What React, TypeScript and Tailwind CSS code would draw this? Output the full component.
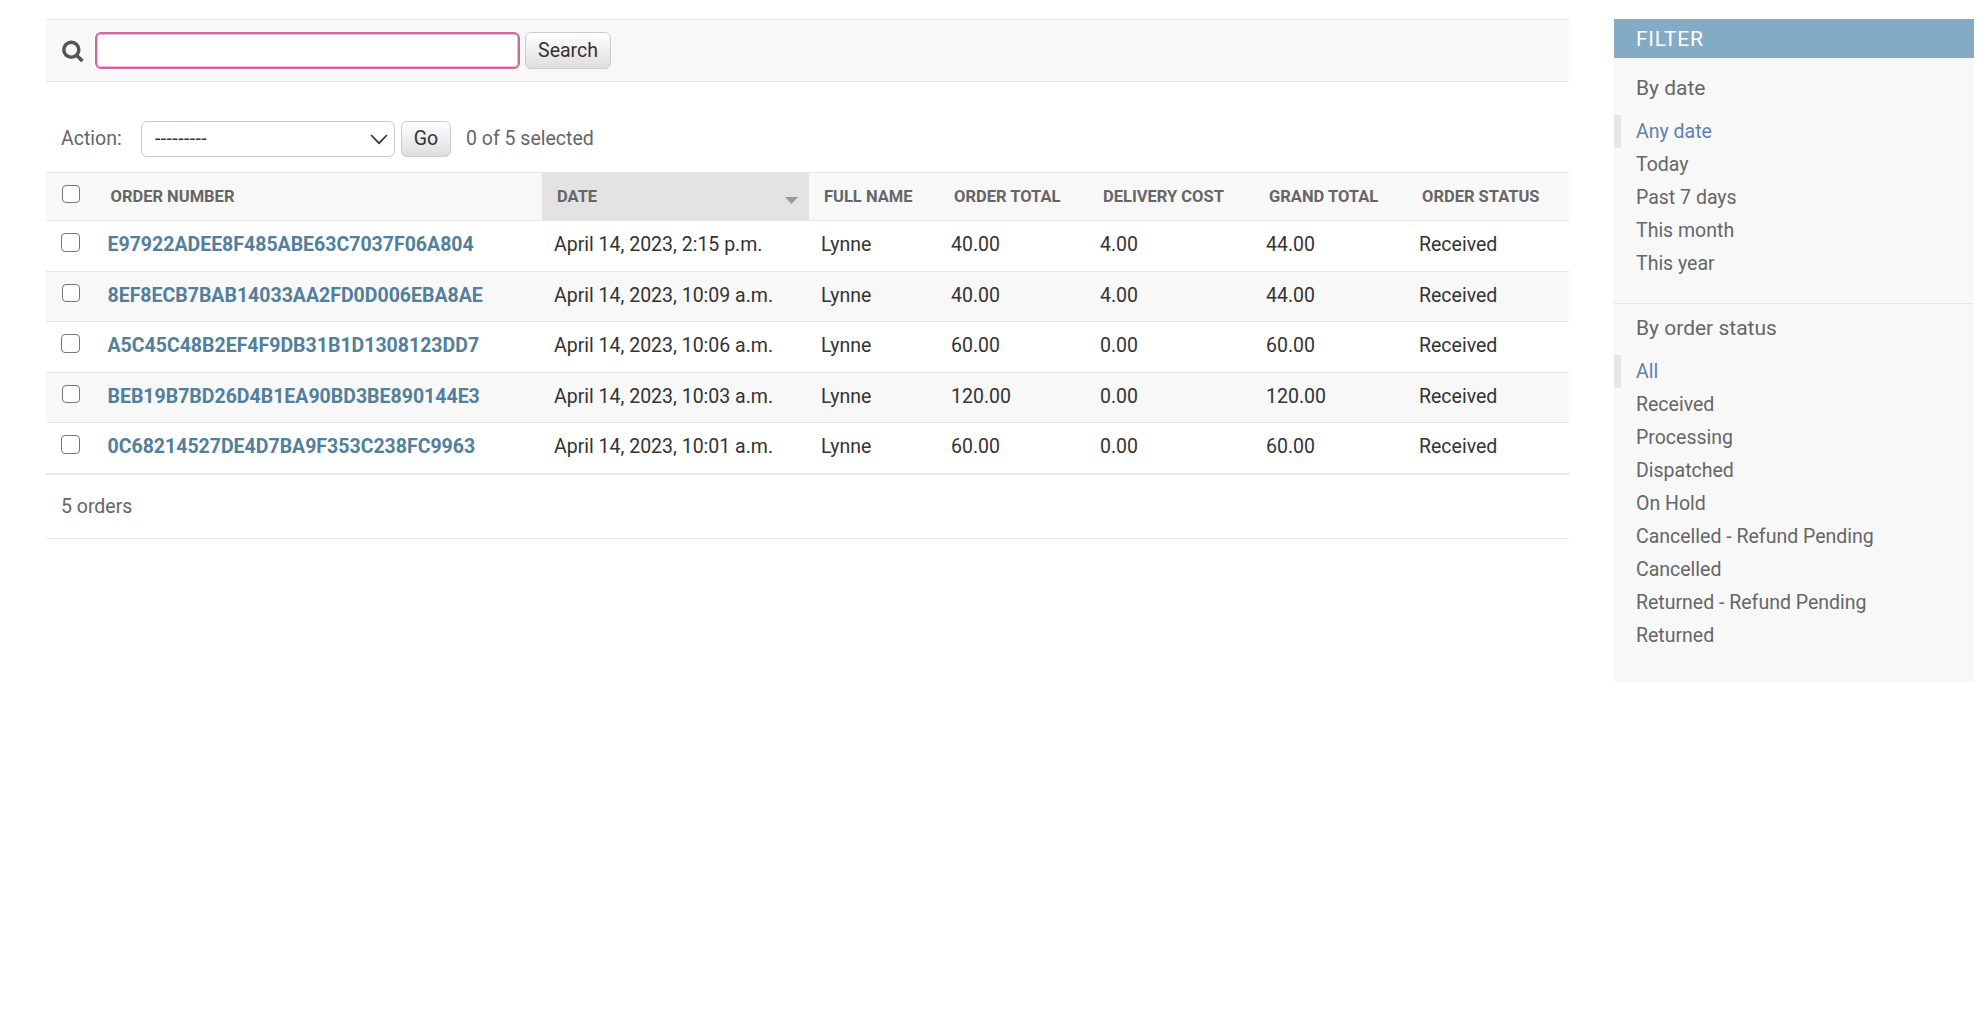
import React from "react";

const columns = [
  { label: "Order number", sorted: false },
  { label: "Date", sorted: true },
  { label: "Full name", sorted: false },
  { label: "Order total", sorted: false },
  { label: "Delivery cost", sorted: false },
  { label: "Grand total", sorted: false },
  { label: "Order status", sorted: false },
];

const orders = [
  ["E97922ADEE8F485ABE63C7037F06A804", "April 14, 2023, 2:15 p.m.", "Lynne", "40.00", "4.00", "44.00", "Received"],
  ["8EF8ECB7BAB14033AA2FD0D006EBA8AE", "April 14, 2023, 10:09 a.m.", "Lynne", "40.00", "4.00", "44.00", "Received"],
  ["A5C45C48B2EF4F9DB31B1D1308123DD7", "April 14, 2023, 10:06 a.m.", "Lynne", "60.00", "0.00", "60.00", "Received"],
  ["BEB19B7BD26D4B1EA90BD3BE890144E3", "April 14, 2023, 10:03 a.m.", "Lynne", "120.00", "0.00", "120.00", "Received"],
  ["0C68214527DE4D7BA9F353C238FC9963", "April 14, 2023, 10:01 a.m.", "Lynne", "60.00", "0.00", "60.00", "Received"],
];

const dateFilters = ["Any date", "Today", "Past 7 days", "This month", "This year"];
const statusFilters = [
  "All",
  "Received",
  "Processing",
  "Dispatched",
  "On Hold",
  "Cancelled - Refund Pending",
  "Cancelled",
  "Returned - Refund Pending",
  "Returned",
];

const buttonClass =
  "rounded-[6px] border border-[#ccc] bg-linear-to-b from-white to-[#dedede] text-[#333] leading-[24px]";

function Checkbox({ large, label }: { large: boolean; label: string }) {
  return (
    <input
      type="checkbox"
      aria-label={label}
      className={
        large
          ? "block size-[19px] appearance-none rounded-[4px] border border-[#767676] bg-white"
          : "ml-px block size-[18px] appearance-none rounded-[4px] border border-[#767676] bg-white"
      }
    />
  );
}

function FilterList({ items }: { items: string[] }) {
  return (
    <ul>
      {items.map((item, i) => (
        <li
          key={item}
          className={
            i === 0
              ? "h-[33px] border-l-[7px] border-[#e6e6e6] pl-[15px] leading-[34px] text-[#5f80b1]"
              : "h-[33px] pl-[22px] leading-[34px]"
          }
        >
          {item}
        </li>
      ))}
    </ul>
  );
}

export default function App() {
  return (
    <div className="flex h-[1030px] items-start overflow-hidden bg-white pt-[19px] pl-[46px] font-['Roboto',sans-serif] text-[19.5px] text-[#666]">
      <main className="w-[1523px]">
        <form className="flex h-[63px] items-start border-y border-[#e6e6e6] bg-[#f8f8f8] pt-3 pl-[15px]">
          <svg viewBox="0 0 24 24" className="mt-2 size-6 shrink-0" fill="none" stroke="#555" strokeWidth="3.5">
            <circle cx="10.3" cy="9.8" r="7.5" />
            <path d="M15.6 15.2 L21.4 21" strokeWidth="3.6" />
          </svg>
          <input
            aria-label="Search"
            className="ml-[10px] h-[37px] w-[425px] rounded-[6px] border-2 border-[#cb6a9a] bg-white px-2 shadow-[inset_0_0_0_1px_#f3bcd4,0_0_0_1px_#fff] outline-none"
          />
          <button type="button" className={`ml-[5px] h-[37px] w-[86px] ${buttonClass}`}>
            Search
          </button>
        </form>

        <div className="flex h-[90px] items-start pt-[39px] pl-[15px]">
          <span className="w-20 pt-[6px] leading-[24px]">Action:</span>
          <div className="relative h-9 w-[254px]">
            <select
              aria-label="Action"
              className="block size-full appearance-none rounded-[6px] border border-[#ccc] bg-white pl-[13px] tracking-[0.4px] text-[#333] outline-none"
            >
              <option>---------</option>
            </select>
            <svg viewBox="0 0 18 11" className="absolute top-[13px] right-[7px] h-[11px] w-[18px]" fill="none" stroke="#333" strokeWidth="1.7">
              <path d="M1 1 L9 9.2 L17 1" />
            </svg>
          </div>
          <button type="button" className={`ml-[6px] h-9 w-[50px] ${buttonClass}`}>
            Go
          </button>
          <span className="ml-[15px] pt-[6px] leading-[24px]">0 of 5 selected</span>
        </div>

        <table className="w-[1523px] table-fixed border-separate border-spacing-0 text-left">
          <colgroup>
            <col className="w-[49.5px]" />
            <col className="w-[446.5px]" />
            <col className="w-[267px]" />
            <col className="w-[130px]" />
            <col className="w-[149px]" />
            <col className="w-[166px]" />
            <col className="w-[153px]" />
            <col className="w-[162px]" />
          </colgroup>
          <thead>
            <tr className="h-[49px] bg-[#f8f8f8] text-[16.5px] uppercase">
              <th className="border-y border-[#e6e6e6] p-0 pt-3 pl-[15px] align-top">
                <Checkbox large={false} label="Select all orders" />
              </th>
              {columns.map((c) => (
                <th
                  key={c.label}
                  className={
                    c.sorted
                      ? "border-y border-[#e6e6e6] bg-[#e3e3e3] p-0 pt-3 pr-[11px] pl-[15px] align-top leading-[24px] font-bold"
                      : "border-y border-[#e6e6e6] p-0 pt-3 pl-[15px] align-top leading-[24px] font-bold whitespace-nowrap"
                  }
                >
                  {c.sorted ? (
                    <div className="flex justify-between">
                      <span>{c.label}</span>
                      <svg viewBox="0 0 13 7" className="mt-3 h-[7px] w-[13px]" fill="#999">
                        <path d="M0 0 H13 L6.5 7 Z" />
                      </svg>
                    </div>
                  ) : (
                    c.label
                  )}
                </th>
              ))}
            </tr>
          </thead>
          <tbody>
            {orders.map((row, i) => (
              <tr key={row[0]} className={i % 2 ? "h-[50px] bg-[#f8f8f8]" : "h-[51px] bg-white"}>
                <td className="border-b border-[#e6e6e6] p-0 pt-3 pl-[15px] align-top">
                  <Checkbox large={i % 2 === 0} label={`Select order ${row[0]}`} />
                </td>
                {row.map((cell, j) => (
                  <td
                    key={j}
                    className={
                      j === 0
                        ? "border-b border-[#e6e6e6] p-0 pt-3 pl-3 align-top leading-[24px] font-bold text-[#527f9b]"
                        : "border-b border-[#e6e6e6] p-0 pt-3 pl-3 align-top leading-[24px] text-[#333]"
                    }
                  >
                    {cell}
                  </td>
                ))}
              </tr>
            ))}
          </tbody>
        </table>

        <p className="h-[65px] border-y border-[#e6e6e6] pt-5 pl-[15px] leading-[24px]">5 orders</p>
      </main>

      <aside className="ml-[45px] h-[663px] w-[360px] bg-[#f8f8f8]">
        <h2 className="h-[39px] bg-[#84abc5] pl-[22px] text-[21px] leading-[41px] tracking-[0.75px] text-white uppercase">
          Filter
        </h2>
        <section className="h-[246px] border-b border-[#e6e6e6]">
          <h3 className="h-[57px] pt-[17px] pl-[22px] text-[21px] leading-[26px]">By date</h3>
          <FilterList items={dateFilters} />
        </section>
        <section>
          <h3 className="h-[51px] pt-[11px] pl-[22px] text-[21px] leading-[26px]">By order status</h3>
          <FilterList items={statusFilters} />
        </section>
      </aside>
    </div>
  );
}
